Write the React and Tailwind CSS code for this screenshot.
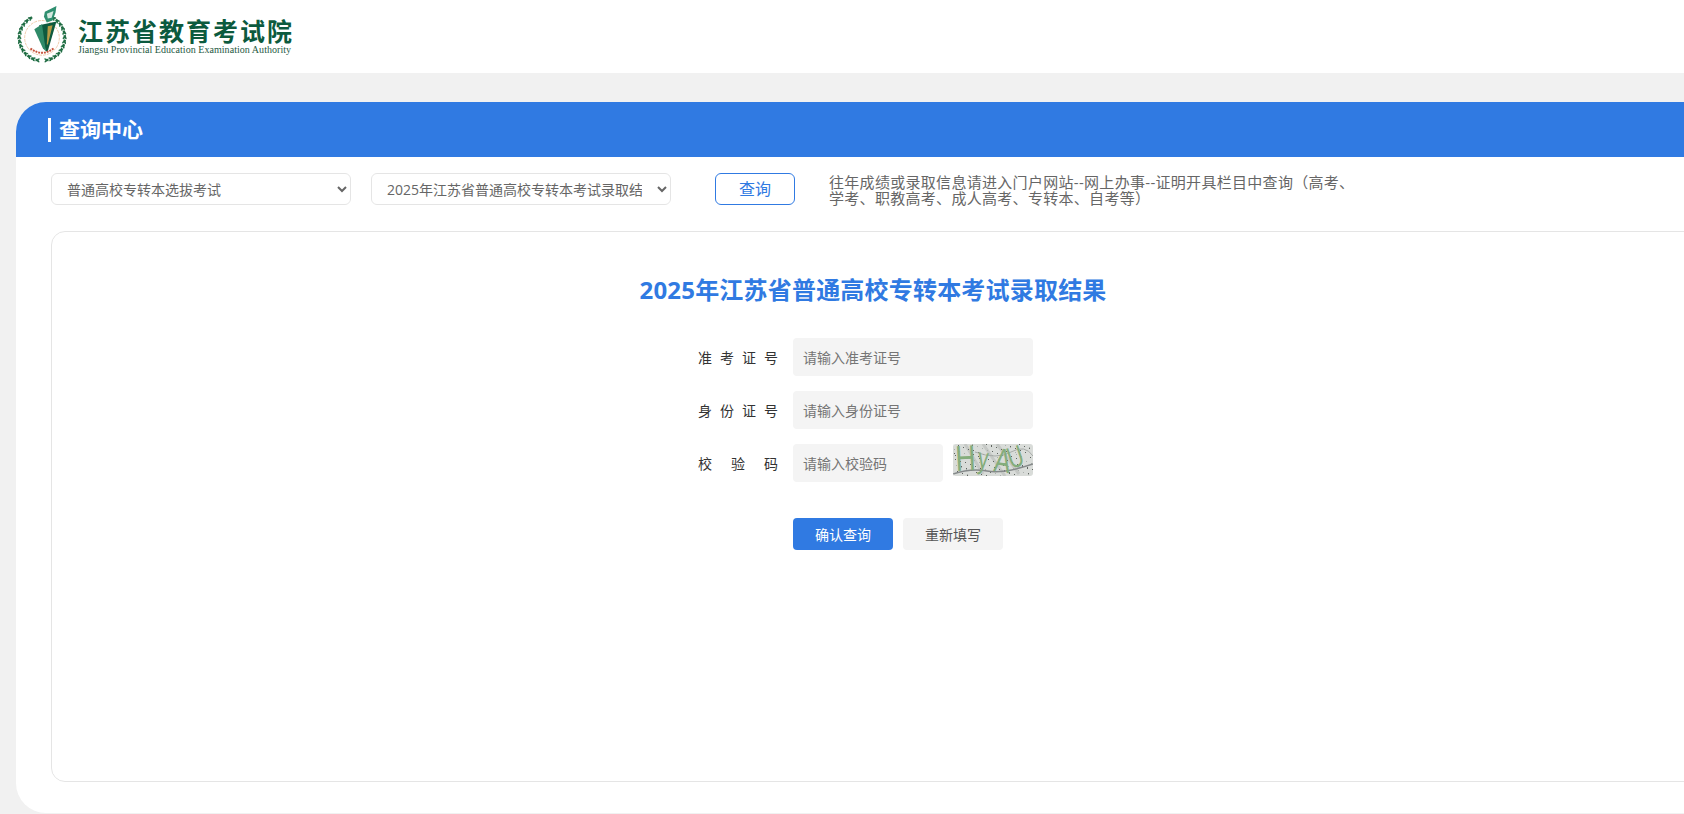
const FONT = "font-['Open_Sans','Noto_Sans_CJK_SC',sans-serif]";

function Emblem() {
  const leaves = [];
  const cx = 27, cy = 35, R = 23.5;
  for (let i = 0; i < 13; i++) {
    for (const side of [1, -1]) {
      const t = ((i * 11.5 + 6) * Math.PI) / 180;
      const px = cx + side * Math.sin(t) * R;
      const py = cy + Math.cos(t) * R;
      const tangent = side * (i * 11.5 + 6);
      leaves.push(
        <g key={`${i}${side}`} transform={`translate(${px} ${py}) rotate(${-tangent})`}>
          <ellipse cx={side * 1.6} cy="-1.6" rx="2.6" ry="1" fill="#2a7a4c" transform={`rotate(${side * 35})`} />
          <ellipse cx={side * 1.6} cy="1.6" rx="2.6" ry="1" fill="#1f6b43" transform={`rotate(${side * -35})`} />
        </g>
      );
    }
  }
  return (
    <svg width="52" height="60" viewBox="0 0 54 62" className="shrink-0">
      {leaves}
      <circle cx="27" cy="35" r="18" fill="none" stroke="#eec9a8" strokeWidth="1" strokeDasharray="3 1" />
      <path d="M30 8 L42 2 L41 9 L38 17 L32 19 L29 13 Z" fill="#2f8f70" />
      <path d="M32 10 L39 7 L37 14 L33 15 Z" fill="#d5e8df" />
      <path d="M24 22 L42 18 L33 49 L31 49 Z" fill="#0e5a3e" />
      <path d="M33 23 L38 22 L33 42 L32 42 Z" fill="#b59a45" />
      <path d="M19 26 L27 21 L31 49 L28 46 Z" fill="#2f8a68" />
      <path d="M15 46 Q27 55 39 46" fill="none" stroke="#c6533a" strokeWidth="2" strokeDasharray="2 1" />
    </svg>
  );
}

function Captcha() {
  const dots = [];
  for (let i = 0; i < 110; i++) {
    const x = (i * 37) % 80;
    const y = (i * 23 + (i % 7) * 5) % 32;
    dots.push(<rect key={i} x={x} y={y} width="1" height="1" fill={i % 3 ? "#5f6560" : "#aab0ac"} />);
  }
  const letters = [
    ["H", 3, 27, -3, 36, 0.78],
    ["y", 24, 24, 6, 30, 0.7],
    ["A", 40, 27, 8, 34, 0.72],
    ["U", 58, 25, -18, 30, 0.72],
  ];
  return (
    <svg width="80" height="32" viewBox="0 0 80 32" className="shrink-0 rounded-[3px] bg-[#d9dcd9]">
      <path d="M30 0 L52 32 M44 0 L66 30 M12 0 L30 30" stroke="#c5c8c5" strokeWidth="3" fill="none" />
      {dots}
      <path d="M0 30 Q18 24 34 27 T80 20" fill="none" stroke="#85898a" strokeWidth="1.5" />
      <path d="M22 8 Q44 16 58 8 T80 12" fill="none" stroke="#a7aba8" strokeWidth="1" />
      {letters.map(([c, x, y, r, s, k]) => (
        <text key={c} fontFamily="Liberation Sans" fontSize={s} fill="#84ad7c" transform={`translate(${x} ${y}) rotate(${r}) scale(${k} 1)`}>{c}</text>
      ))}
    </svg>
  );
}

function Label({ chars }) {
  return (
    <span className="w-[80px] h-[38px] flex items-center justify-between text-[14px] text-[#333]">
      {chars.map((c) => <span key={c}>{c}</span>)}
    </span>
  );
}

function Field({ label, placeholder }) {
  return (
    <div className="flex items-start">
      <Label chars={label} />
      <input placeholder={placeholder} className="ml-[15px] w-[240px] h-[38px] px-[10px] rounded-[4px] bg-[#f4f4f4] text-[14px] outline-none placeholder:text-[#757575]" />
    </div>
  );
}

export default function App() {
  return (
    <div className={`h-[814px] w-[1684px] overflow-hidden bg-[#f1f1f1] ${FONT}`}>
      <header className="h-[73px] bg-white flex items-start pl-[16px] pt-[4px]">
        <Emblem />
        <div className="ml-[10px] mt-[13px] flex flex-col">
          <span className="text-[25px] leading-[28px] font-bold tracking-[2px] text-[#0c5a3e] whitespace-nowrap">江苏省教育考试院</span>
          <span className="font-['Liberation_Serif',serif] text-[10px] leading-[10px] tracking-[0.04px] text-[#1f5a44] whitespace-nowrap">Jiangsu Provincial Education Examination Authority</span>
        </div>
      </header>

      <main className="mt-[29px] ml-[16px] w-[1700px] h-[711px] bg-white rounded-l-[30px] overflow-hidden flex flex-col">
        <div className="h-[55px] shrink-0 bg-[#307ae2] flex items-center pl-[32px] text-white text-[21px] font-bold">
          <span className="w-[3px] h-[24px] bg-white mr-[8px]"></span>查询中心
        </div>

        <div className="h-[74px] shrink-0 flex items-center pl-[35px] pb-[10px]">
          <select className="w-[300px] h-[32px] pl-[11px] pr-[2px] rounded-[6px] border border-[#e5e5e5] bg-white text-[14px] text-[#666] outline-none">
            <option>普通高校专转本选拔考试</option>
          </select>
          <select className="ml-[20px] w-[300px] h-[32px] pl-[11px] pr-[12px] rounded-[6px] border border-[#e5e5e5] bg-white text-[14px] text-[#666] outline-none">
            <option>2025年江苏省普通高校专转本考试录取结果</option>
          </select>
          <button className="ml-[44px] w-[80px] h-[32px] rounded-[6px] border border-[#307ae2] bg-white text-[16px] text-[#307ae2]">查询</button>
          <p className="ml-[34px] w-[532px] mt-[1px] text-[15px] leading-[16px] tracking-[0.3px] text-[#666]">往年成绩或录取信息请进入门户网站--网上办事--证明开具栏目中查询（高考、学考、职教高考、成人高考、专转本、自考等）</p>
        </div>

        <section className="ml-[35px] w-[1700px] h-[551px] shrink-0 border border-[#e5e5e5] rounded-[14px]">
          <h1 className="mt-[41px] w-[1642px] text-center text-[24px] leading-[34px] tracking-[0.2px] font-bold text-[#307ae2]">2025年江苏省普通高校专转本考试录取结果</h1>
          <div className="mt-[31px] ml-[646px] flex flex-col gap-[15px]">
            <Field label={["准", "考", "证", "号"]} placeholder="请输入准考证号" />
            <Field label={["身", "份", "证", "号"]} placeholder="请输入身份证号" />
            <div className="flex items-start">
              <Label chars={["校", "验", "码"]} />
              <input placeholder="请输入校验码" className="ml-[15px] w-[150px] h-[38px] px-[10px] rounded-[4px] bg-[#f4f4f4] text-[14px] outline-none placeholder:text-[#757575]" />
              <span className="ml-[10px]"><Captcha /></span>
            </div>
          </div>
          <div className="mt-[36px] ml-[741px] flex gap-[10px]">
            <button className="w-[100px] h-[32px] rounded-[4px] bg-[#307ae2] text-white text-[14px]">确认查询</button>
            <button className="w-[100px] h-[32px] rounded-[4px] bg-[#f4f4f4] text-[#555] text-[14px]">重新填写</button>
          </div>
        </section>
      </main>
    </div>
  );
}
